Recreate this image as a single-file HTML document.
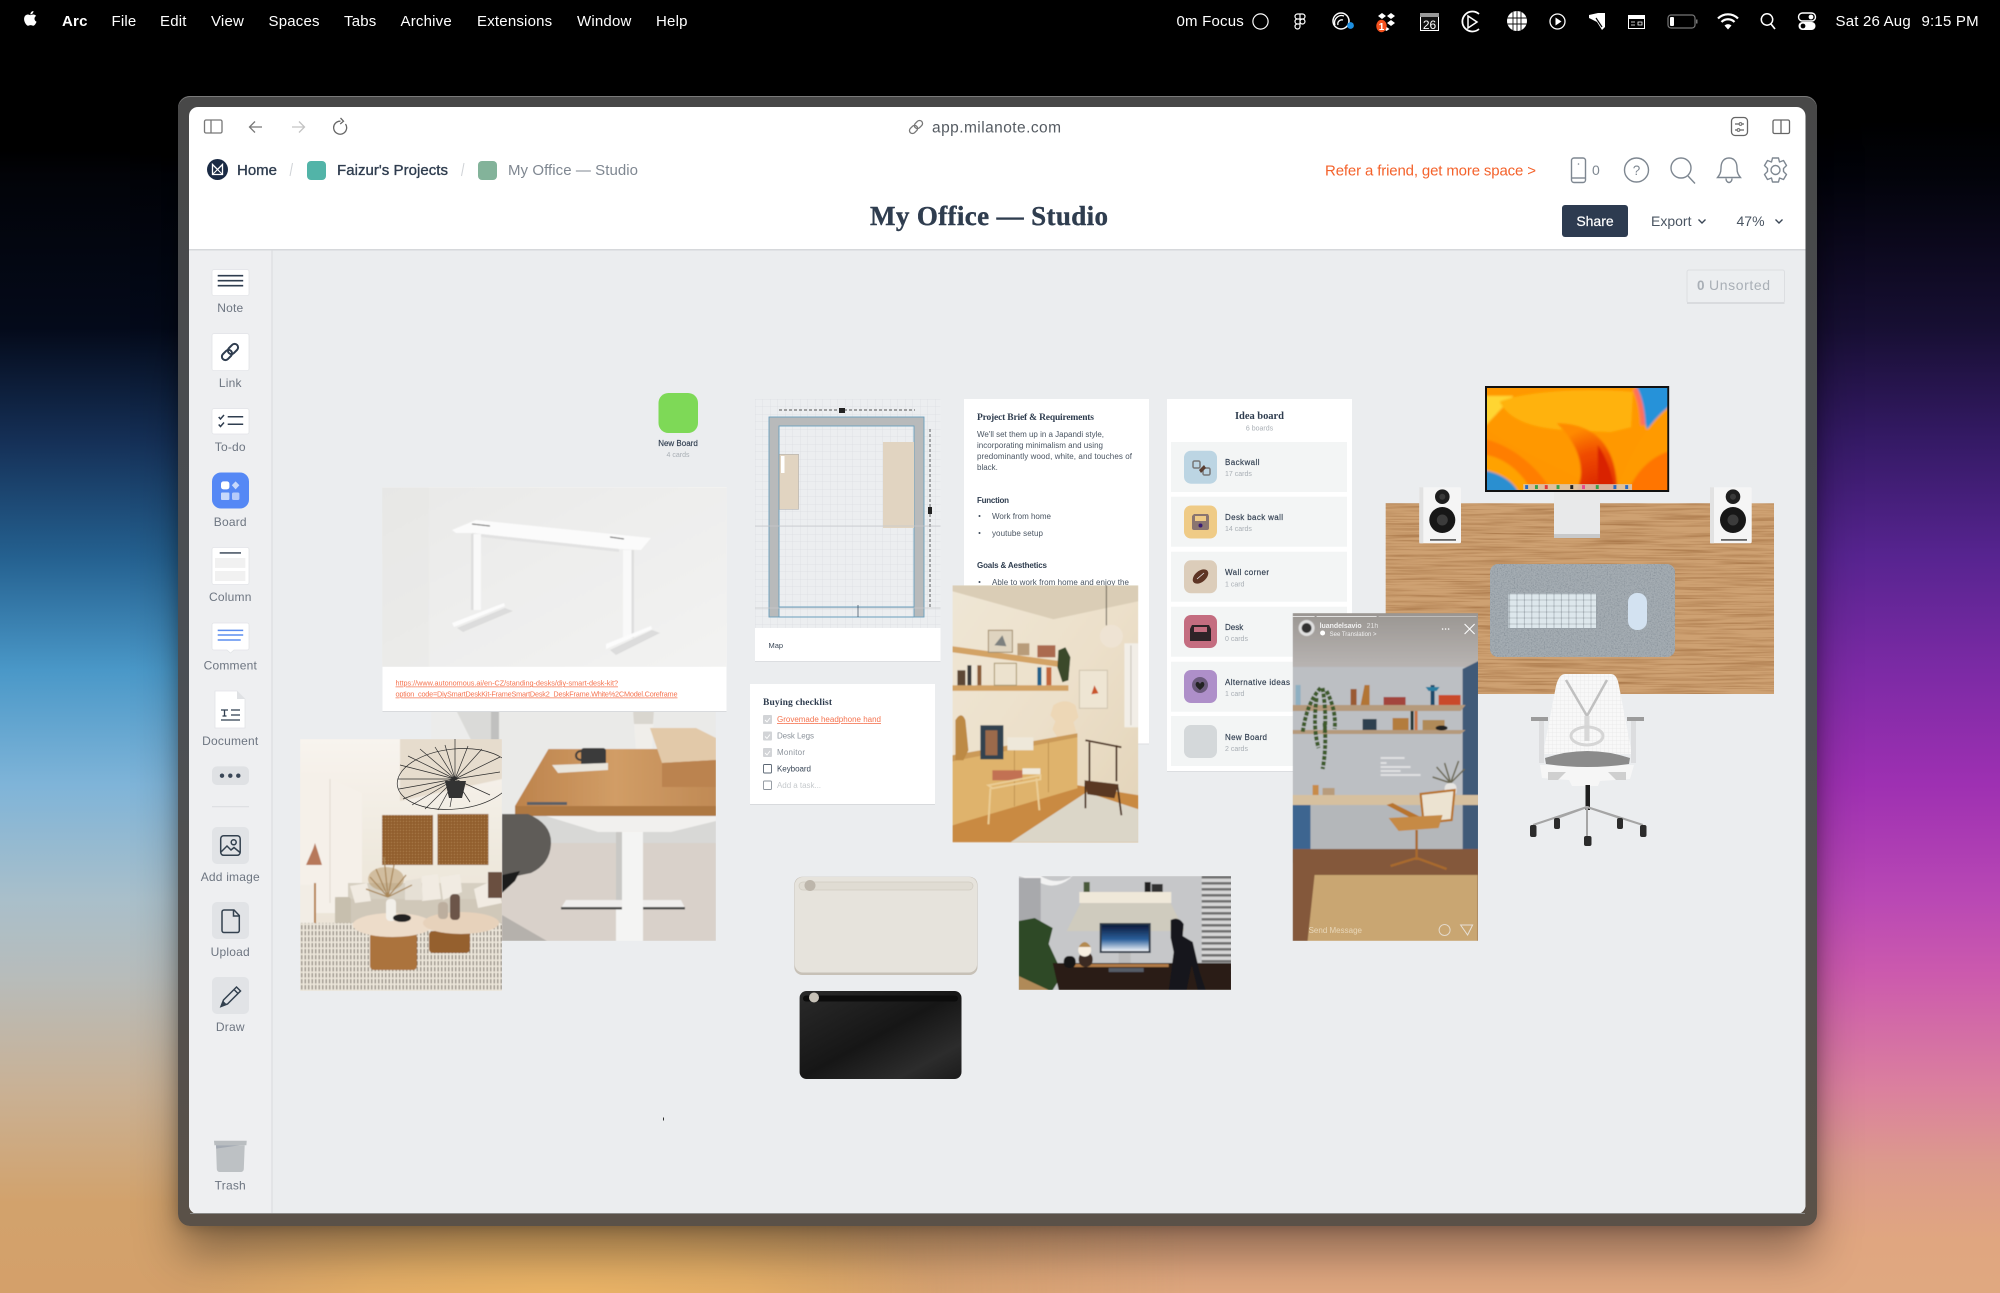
<!DOCTYPE html>
<html><head><meta charset="utf-8"><title>My Office — Studio</title>
<style>
html,body{margin:0;padding:0;width:2000px;height:1293px;overflow:hidden;background:#000}
.wp{position:absolute;left:0;top:0;width:2000px;height:1293px}
#w1{background:linear-gradient(to bottom,#000 0,#000 150px,#020308 176px,#040a1a 328px,#153057 442px,#24608f 556px,#4a98c8 671px,#7fb4d8 785px,#a9bfca 899px,#b7bcbb 975px,#c9b195 1089px,#d2a26c 1203px,#d4a06a 1293px)}
#w2{background:linear-gradient(to bottom,#000 0,#000 120px,#02030a 176px,#170f33 328px,#351a66 442px,#572490 556px,#7c2aa5 671px,#9e30b2 785px,#b948b4 899px,#cc5aad 975px,#db809e 1089px,#dc9a8c 1165px,#e0a680 1241px,#e0a880 1293px);-webkit-mask-image:linear-gradient(to right,transparent 40%,#000 60%);mask-image:linear-gradient(to right,transparent 40%,#000 60%)}
#w3{background:radial-gradient(ellipse 380px 110px at 560px 1293px,#ecb567 0,rgba(236,181,103,.7) 50%,rgba(236,181,103,0) 100%)}
#win{position:absolute;left:177.5px;top:96px;width:1639.5px;height:1130px;border-radius:12px;background:linear-gradient(to bottom,#484848 0,#4a4f55 50%,#5a5148 100%);box-shadow:0 30px 45px -2px rgba(0,0,0,.36),0 0 16px rgba(0,0,0,.28),inset 0 1px 0 #7a7a7a}
svg#s{position:absolute;left:0;top:0}
text{font-family:"Liberation Sans",sans-serif;white-space:pre}
.sf{font-family:"Liberation Serif",serif;font-weight:700}
.m{font-size:15px;fill:#fff;letter-spacing:.2px}
.lb{font-size:12px;fill:#6d7581;text-anchor:middle;letter-spacing:.2px}
.c{font-size:8px;fill:#4a5562}
.h{font-size:8px;fill:#2f3d4f;font-weight:700}
.st{font-size:7px;fill:#a9afb5}
.bn{font-size:8px;fill:#2f3d4f;stroke:#2f3d4f;stroke-width:.15px}
.ck{font-size:8px;fill:#8d949c}
.med{stroke-width:.35px}
</style></head><body>
<div class="wp" id="w1"></div><div class="wp" id="w2"></div><div class="wp" id="w3"></div>
<div id="win"></div>
<svg id="s" width="2000" height="1293" viewBox="0 0 2000 1293" xmlns="http://www.w3.org/2000/svg">
<defs>
<clipPath id="inner"><rect x="189" y="107" width="1616.5" height="1107" rx="9"/></clipPath>
<pattern id="grid" width="7.5" height="7.5" patternUnits="userSpaceOnUse"><path d="M7.5 0H0V7.5" fill="none" stroke="#d6d8db" stroke-width=".5"/></pattern>
<pattern id="keys" width="7.4" height="6" patternUnits="userSpaceOnUse"><rect x=".3" y=".3" width="6.8" height="5.4" rx=".6" fill="#dde7ec"/></pattern>
<pattern id="mesh" width="4" height="4" patternUnits="userSpaceOnUse"><path d="M4 0H0V4" fill="none" stroke="#e2e2e2" stroke-width=".6"/></pattern>
<pattern id="weave" width="3" height="3" patternUnits="userSpaceOnUse"><rect width="3" height="3" fill="#8f5c2b"/><rect x=".9" y=".9" width="1.1" height="1.1" fill="#bd8f5b"/></pattern>
<pattern id="rugp" width="3.500" height="6" patternUnits="userSpaceOnUse"><rect width="3.500" height="6" fill="#ece6da"/><rect x="1.300" width=".9" height="4.500" fill="#5e564c"/></pattern>
<pattern id="blinds" width="6" height="6" patternUnits="userSpaceOnUse"><rect width="6" height="6" fill="#d6d6d6"/><rect width="6" height="2.600" fill="#6f6f6f"/></pattern>
<filter id="woodf" x="0" y="0" width="100%" height="100%" color-interpolation-filters="sRGB"><feTurbulence type="fractalNoise" baseFrequency="0.015 0.5" numOctaves="3" seed="4"/><feColorMatrix values="0 0 0 0 .62  0 0 0 0 .42  0 0 0 0 .24  1.100 1.100 0 0 -.95"/></filter>
<filter id="feltf" x="0" y="0" width="100%" height="100%" color-interpolation-filters="sRGB"><feTurbulence type="fractalNoise" baseFrequency="0.7" numOctaves="2" seed="7"/><feColorMatrix values="0 0 0 0 .45  0 0 0 0 .49  0 0 0 0 .53  .9 .9 0 0 -.8"/></filter>
<filter id="soft" x="-2%" y="-2%" width="104%" height="104%"><feGaussianBlur stdDeviation=".45"/></filter>
<filter id="soft2" x="-2%" y="-2%" width="104%" height="104%"><feGaussianBlur stdDeviation="1.100"/></filter>
<linearGradient id="g1" x1="0" y1="0" x2="1" y2="1"><stop offset="0" stop-color="#e9e9e8"/><stop offset=".5" stop-color="#eeeeed"/><stop offset="1" stop-color="#f3f3f2"/></linearGradient>
<linearGradient id="woodt" x1="0" y1="0" x2="1" y2="0"><stop offset="0" stop-color="#bd834c"/><stop offset=".5" stop-color="#d19d66"/><stop offset="1" stop-color="#c08a55"/></linearGradient>
<linearGradient id="wallL" x1="0" y1="0" x2="0" y2="1"><stop offset="0" stop-color="#f8f4ee"/><stop offset=".45" stop-color="#efe9de"/><stop offset="1" stop-color="#e8dfd1"/></linearGradient>
<linearGradient id="wallS" x1="0" y1="0" x2="1" y2="1"><stop offset="0" stop-color="#efe6d5"/><stop offset=".5" stop-color="#ece0ca"/><stop offset="1" stop-color="#e2d3b8"/></linearGradient>
<linearGradient id="insT" x1="0" y1="0" x2="0" y2="1"><stop offset="0" stop-color="#9a9692"/><stop offset="1" stop-color="#b8b4b2"/></linearGradient>
<linearGradient id="blk" x1="0" y1="0" x2="1" y2="1"><stop offset="0" stop-color="#2a2a2a"/><stop offset=".5" stop-color="#161616"/><stop offset=".8" stop-color="#2c2c2c"/><stop offset="1" stop-color="#1c1c1c"/></linearGradient>
<linearGradient id="scr" x1="0" y1="0" x2="0" y2="1"><stop offset="0" stop-color="#0e1a3c"/><stop offset=".55" stop-color="#2a5f9a"/><stop offset="1" stop-color="#eef2f8"/></linearGradient>
<radialGradient id="redc" cx=".65" cy=".95" r=".9"><stop offset="0" stop-color="#d92400"/><stop offset=".6" stop-color="#f04c00"/><stop offset="1" stop-color="#ff8a00"/></radialGradient>
</defs>

<!-- menu bar -->
<g transform="translate(20.5,8.5) scale(.82)" fill="#fff"><path d="M17.05 20.28c-.98.95-2.05.8-3.08.35-1.09-.46-2.09-.48-3.24 0-1.44.62-2.2.44-3.06-.35C2.79 15.25 3.51 7.59 9.05 7.31c1.35.07 2.29.74 3.08.8 1.18-.24 2.31-.93 3.57-.84 1.51.12 2.65.72 3.4 1.8-3.12 1.87-2.38 5.98.48 7.13-.57 1.5-1.31 2.99-2.54 4.09zM12.03 7.25c-.15-2.23 1.66-4.07 3.74-4.25.29 2.58-2.34 4.5-3.74 4.25z"/></g>
<text class="m" x="62" y="26" font-weight="700">Arc</text>
<text class="m" x="111.500" y="26">File</text><text class="m" x="160" y="26">Edit</text><text class="m" x="211" y="26">View</text><text class="m" x="268.500" y="26">Spaces</text><text class="m" x="344" y="26">Tabs</text><text class="m" x="400.500" y="26">Archive</text><text class="m" x="477" y="26">Extensions</text><text class="m" x="577" y="26">Window</text><text class="m" x="656" y="26">Help</text>
<text class="m" x="1176.500" y="26">0m Focus</text>
<circle cx="1260.500" cy="21.500" r="7.600" fill="none" stroke="#fff" stroke-width="1.200"/>
<g fill="none" stroke="#fff" stroke-width="1.200"><path d="M1300 14h-2.500a2.500 2.500 0 0 0 0 5h2.500zM1300 14h2.500a2.500 2.500 0 0 1 0 5h-2.500zM1300 19h-2.500a2.500 2.500 0 0 0 0 5h2.500zM1300 24h-2.500a2.500 2.500 0 1 0 2.500 2.500zM1302.500 19a2.500 2.500 0 1 1-.01 0z"/>
<circle cx="1341" cy="21" r="8" stroke-width="1.500"/><path d="M1335 25a7 7 0 0 1 9-9M1338 25a4 4 0 0 1 5-5" stroke-width="1.300"/></g>
<circle cx="1350.500" cy="25.500" r="3.400" fill="#1d8fe0"/>
<g fill="#fff"><path d="M1382 13l4 3-4 3-4-3zM1391 13l4 3-4 3-4-3zM1382 20l4 3-4 3-4-3zM1391 20l4 3-4 3-4-3zM1386.500 27l3 2-3 2-3-2z"/></g>
<ellipse cx="1381.500" cy="26" rx="5.200" ry="6.200" fill="#f4511e"/><text x="1381.500" y="30" font-size="10" font-weight="700" fill="#fff" text-anchor="middle">1</text>
<rect x="1420" y="13" width="19" height="18" fill="#fff"/><rect x="1420" y="13" width="19" height="4" fill="#999"/><rect x="1421" y="17" width="17" height="13" fill="#111"/><text x="1429.500" y="29" font-size="12" fill="#fff" text-anchor="middle">26</text>
<g fill="none" stroke="#fff" stroke-width="1.800"><path d="M1479 14a10 10 0 1 0 0 15"/><path d="M1468 16l9 6-9 6z" stroke-width="1.500"/></g>
<circle cx="1517" cy="21" r="10" fill="#fff"/><g stroke="#111" stroke-width=".9" fill="none"><path d="M1507 18h20M1507 24h20M1513 12v18M1517 11v20M1521 12v18"/></g>
<circle cx="1557.500" cy="21.500" r="7.500" fill="none" stroke="#fff" stroke-width="1.300"/><path d="M1555.500 17.500l6 4-6 4z" fill="#fff"/>
<path d="M1589 15l9-2h7v14l-3 3-5-8-8-4z" fill="#fff"/><path d="M1596 18l6 9" stroke="#000" stroke-width="1.200"/>
<rect x="1628.500" y="15.500" width="16" height="13" fill="none" stroke="#fff" stroke-width="1"/><rect x="1628.500" y="15.500" width="16" height="3.500" fill="#fff"/><path d="M1631 22h4M1631 25h4M1638 22h4v3h-4z" stroke="#fff" stroke-width=".8" fill="none"/>
<rect x="1668" y="15" width="27" height="13" rx="3" fill="none" stroke="#777" stroke-width="1.200"/><rect x="1670" y="17" width="4" height="9" rx="1" fill="#fff"/><rect x="1696" y="19.500" width="1.500" height="4" fill="#777"/>
<g fill="none" stroke="#fff" stroke-width="2.200"><path d="M1718 18.500a14 14 0 0 1 20 0"/><path d="M1721.500 22a9 9 0 0 1 13 0"/></g><path d="M1724.500 25.500a5 5 0 0 1 7 0l-3.500 4z" fill="#fff"/>
<circle cx="1767" cy="19.500" r="5.700" fill="none" stroke="#fff" stroke-width="1.500"/><path d="M1771 24l4 5" stroke="#fff" stroke-width="1.700"/>
<rect x="1798.500" y="13" width="17" height="8" rx="4" fill="none" stroke="#fff" stroke-width="1.400"/><circle cx="1811" cy="17" r="2.400" fill="#fff"/><rect x="1798.500" y="22" width="17" height="8" rx="4" fill="#fff"/><circle cx="1803" cy="26" r="2.400" fill="#000"/>
<text class="m" x="1835.500" y="26">Sat 26 Aug</text><text class="m" x="1921.500" y="26">9:15 PM</text>

<g clip-path="url(#inner)">
<rect x="189" y="107" width="1617" height="1107" fill="#fff"/>
<rect x="189" y="250" width="83" height="964" fill="#eeeff1"/>
<rect x="272" y="250" width="1534" height="964" fill="#ebedef"/>
<rect x="189" y="249" width="1617" height="1.500" fill="#d6d8db"/>
<rect x="271.500" y="250" width="1" height="964" fill="#d8dadd"/>
</g>
<rect x="190" y="1213" width="1615" height="1" fill="#8a8a88"/>

<!-- browser chrome -->
<g fill="none" stroke="#777" stroke-width="1.300">
<rect x="204.500" y="120" width="17.500" height="13" rx="1.500"/><path d="M211 120v13"/>
<path d="M262 127h-12M255 121.500l-5.500 5.500 5.500 5.500"/>
<path d="M292 127h12M299 121.500l5.500 5.500-5.500 5.500" stroke="#c3c3c3"/>
<path d="M345.500 124a6.500 6.500 0 1 1-5-2.800M340.500 118l3 3.200-3.300 2.800" stroke="#666"/>
<rect x="1731.500" y="117.500" width="16" height="18" rx="3.500" stroke="#666"/><path d="M1735 124h4M1742 124h2M1735 130h2M1740 130h4" stroke="#666"/><circle cx="1740.500" cy="124" r="1.400" stroke="#666" stroke-width="1"/><circle cx="1738.500" cy="130" r="1.400" stroke="#666" stroke-width="1"/>
<rect x="1773" y="120" width="16.500" height="13.500" rx="1.500" stroke="#666"/><path d="M1781 120v13.500" stroke="#666"/>
<g transform="translate(916,127) rotate(-45)" stroke="#777"><rect x="-8" y="-3" width="9" height="6" rx="3"/><rect x="-1" y="-3" width="9" height="6" rx="3"/></g>
</g>
<text x="932" y="132.500" font-size="15.500" fill="#555b62" textLength="129">app.milanote.com</text>

<circle cx="217.500" cy="169.500" r="10.500" fill="#1a2a44"/><path d="M212.500 164.500v10h10v-10l-5 5z" fill="none" stroke="#fff" stroke-width="1.300"/><path d="M212.500 174.500l5-5 5 5" fill="none" stroke="#fff" stroke-width="1"/>
<text x="237" y="175" font-size="15" fill="#2f3d4f" stroke="#2f3d4f" class="med" textLength="40">Home</text>
<path d="M292.500 163l-2.500 13M464 163l-2.500 13" stroke="#cfd2d6"/>
<rect x="307" y="161" width="19" height="19" rx="4" fill="#52b4a8"/>
<text x="337" y="175" font-size="15" fill="#2f3d4f" stroke="#2f3d4f" class="med" textLength="111">Faizur's Projects</text>
<rect x="478" y="161" width="19" height="19" rx="4" fill="#83b39a"/>
<text x="508" y="175" font-size="15" fill="#7f8791" textLength="130">My Office — Studio</text>

<text x="1325" y="175.500" font-size="15" fill="#f4622b" textLength="211">Refer a friend, get more space &gt;</text>
<g fill="none" stroke="#7e8791" stroke-width="1.400">
<rect x="1571.500" y="158" width="14" height="24.500" rx="2.500"/><path d="M1571.500 178h14"/>
<circle cx="1636.500" cy="170" r="12"/>
<circle cx="1681" cy="168" r="10"/><path d="M1688 176l7 7.500"/>
<path d="M1729 158c-6 0-8 5-8 10 0 5-1.500 7-3.500 9.500h23c-2-2.500-3.500-4.500-3.500-9.500 0-5-2-10-8-10z M1726 178.500a3 4 0 0 0 6 0"/>
<g transform="translate(1775.500,170)"><circle r="4.500"/><path d="M-3-12h6l1 4 4-1.500 3 5-3 3v3l3 3-3 5-4-1.500-1 4h-6l-1-4-4 1.500-3-5 3-3v-3l-3-3 3-5 4 1.500z" stroke-linejoin="round"/></g>
</g>
<circle cx="1578.500" cy="164" r=".8" fill="#7e8791"/>
<text x="1592" y="175" font-size="14" fill="#7e8791">0</text>
<text x="1636.500" y="175" font-size="13.500" fill="#7e8791" text-anchor="middle">?</text>

<text x="989" y="225" class="sf" font-size="27" fill="#2f3d4f" stroke="#2f3d4f" stroke-width=".4" text-anchor="middle" textLength="238">My Office — Studio</text>
<rect x="1562" y="205" width="66" height="32" rx="3" fill="#2d3b50"/>
<text x="1595" y="226" font-size="14" fill="#fff" text-anchor="middle" stroke="#fff" stroke-width=".2">Share</text>
<text x="1651" y="226" font-size="14" fill="#4a5562">Export</text>
<path d="M1698.500 219.500l3.500 3.500 3.500-3.500M1775.500 219.500l3.500 3.500 3.500-3.500" fill="none" stroke="#3b4756" stroke-width="1.400"/>
<text x="1736.500" y="226" font-size="14" fill="#4a5562">47%</text>
<rect x="1687" y="270" width="97.500" height="33" rx="2" fill="#eceef0" stroke="#dcdee1"/><rect x="1687" y="302" width="97.500" height="2" fill="#d9dbde"/>
<text x="1697" y="290" font-size="13.500" fill="#a9afb6" font-weight="700">0</text><text x="1709" y="290" font-size="14" fill="#a9afb6" textLength="61">Unsorted</text>

<!-- sidebar -->
<g fill="#fff" stroke="#e2e4e7" stroke-width=".8">
<rect x="212" y="269.600" width="37" height="26" rx="2"/><rect x="212" y="333.600" width="37" height="37" rx="2"/><rect x="212" y="408.600" width="37" height="25.400" rx="2"/><rect x="212" y="547.500" width="37" height="37" rx="2"/>
<path d="M214 623h33a2 2 0 0 1 2 2v23a2 2 0 0 1-2 2h-13l-3.500 3-3.500-3h-13a2 2 0 0 1-2-2v-23a2 2 0 0 1 2-2z"/>
<path d="M215 691h22l8 8v29h-30z"/>
</g>
<path d="M237 691l8 8h-8z" fill="#dfe1e4"/>
<path d="M217.700 275.700h25.500M217.700 280.700h25.500M217.700 285.700h25.500" stroke="#2f3d4f" stroke-width="1.700"/>
<g fill="none" stroke="#2f3d4f" stroke-width="2" transform="translate(230,352) rotate(-45)"><rect x="-10" y="-3.500" width="11.500" height="7" rx="3.500"/><rect x="-1.500" y="-3.500" width="11.500" height="7" rx="3.500"/></g>
<path d="M218.700 417l1.800 2 3.500-4M218.700 424.500l1.800 2 3.500-4" fill="none" stroke="#2f3d4f" stroke-width="1.500"/><path d="M227.700 416.800h15.500M227.700 424.300h15.500" stroke="#2f3d4f" stroke-width="1.500"/>
<rect x="212" y="472.500" width="37" height="36" rx="9" fill="#5588f5"/><rect x="221" y="481.400" width="8.400" height="8" rx="2.500" fill="#fff"/><path d="M235.600 481.400l3.800 3.800-3.800 4.200-3.800-4.200z" fill="#c7d8fb"/><rect x="221" y="492.500" width="8.400" height="7.500" rx="1" fill="#c7d8fb"/><rect x="232" y="492.500" width="7.400" height="7.500" rx="1.500" fill="#b5cbfa"/>
<path d="M219.700 552.900h21.300" stroke="#2f3d4f" stroke-width="1.400"/><rect x="215" y="558" width="30.300" height="9.900" fill="#f1f1f1"/><rect x="215" y="571" width="30.300" height="10" fill="#f1f1f1"/>
<path d="M217.700 630.400h25.500M217.700 635h25.500M217.700 640h23" stroke="#5b8def" stroke-width="1.500"/>
<path d="M221 710h7M224.500 710v6M222.500 716h4" stroke="#2f3d4f" stroke-width="1.300" fill="none"/><path d="M231 710h9M231 715h9M221 720h19" stroke="#2f3d4f" stroke-width="1.200"/>
<rect x="212" y="766.400" width="37" height="18.600" rx="5" fill="#dfe1e4"/><circle cx="222" cy="775.700" r="2.200" fill="#3a4757"/><circle cx="230.300" cy="775.700" r="2.200" fill="#3a4757"/><circle cx="238.300" cy="775.700" r="2.200" fill="#3a4757"/>
<path d="M212 806.700h37" stroke="#dcdee1" stroke-width="1.200"/>
<rect x="212" y="827" width="37" height="37" rx="5" fill="#e1e3e6"/><rect x="212" y="902" width="37" height="37" rx="5" fill="#e1e3e6"/><rect x="212" y="977" width="37" height="37" rx="5" fill="#e1e3e6"/>
<g fill="none" stroke="#33414f" stroke-width="1.500"><rect x="220.700" y="835.700" width="19.500" height="19.600" rx="3"/><circle cx="233.700" cy="842.300" r="2.500"/><path d="M221 852l6-6 4 4 3-2.500 6 5"/>
<path d="M224 910h10l5.300 5.500v15a2 2 0 0 1-2 2h-13.300a2 2 0 0 1-2-2v-18.500a2 2 0 0 1 2-2z"/><path d="M233.500 910v6h6"/>
<path d="M221 1006.500l2.500-6.500 13-13 4 4-13 13z"/><path d="M234 989.500l4 4"/></g>
<path d="M220.300 1007.500l3-6.500 3.500 3.500z" fill="#33414f"/>
<path d="M214 1140.700h32.700l-.3 4.600h-32z" fill="#b9bdc0"/><path d="M216 1145.300h28.700l-.9 24a3 3 0 0 1-3 2.700h-21a3 3 0 0 1-3-2.700z" fill="#bdc1c4"/><path d="M216 1145.300h24l-23.800 3.300z" fill="#a3a9b2"/>
<text class="lb" x="230.300" y="312">Note</text><text class="lb" x="230.300" y="387">Link</text><text class="lb" x="230.300" y="451">To-do</text><text class="lb" x="230.300" y="526">Board</text><text class="lb" x="230.300" y="601">Column</text><text class="lb" x="230.300" y="669.500">Comment</text><text class="lb" x="230.300" y="745">Document</text><text class="lb" x="230.300" y="881">Add image</text><text class="lb" x="230.300" y="956">Upload</text><text class="lb" x="230.300" y="1031">Draw</text><text class="lb" x="230.300" y="1189.500">Trash</text>

<!-- new board -->
<rect x="658.500" y="393" width="39.500" height="40" rx="10" fill="#7ed957"/>
<text x="678" y="446" class="bn" text-anchor="middle">New Board</text>
<text x="678" y="457" font-size="7" fill="#a9afb5" text-anchor="middle">4 cards</text>

<!-- table photo -->
<svg x="431" y="710" width="285" height="231" viewBox="0 0 285 231"><g filter="url(#soft)">
<rect width="285" height="231" fill="#eaeae8"/>
<rect width="67" height="40" fill="#dadad8"/><path d="M0 0h25l20 40H0z" fill="#ececeb"/><rect x="60" width="8" height="70" fill="#c0c0bf"/>
<rect y="106" width="285" height="28" fill="#d8d8d6"/>
<path d="M0 133h285v98H0z" fill="#d9d1ca"/>
<path d="M202 0h21l-2 40q-1 8-8 8t-8-8z" fill="#f0eeea"/><path d="M202 0h21l-1 14h-19z" fill="#d9d6cf"/>
<path d="M117.500 39H285V96H84z" fill="url(#woodt)"/><path d="M84 96H285v10H84z" fill="#ae7843"/>
<path d="M219 18h46l20 10v22l-54 3z" fill="#e2c9a9"/><path d="M231 53l54-3v27h-54z" fill="#bb8350"/>
<rect x="150" y="38" width="25" height="20" rx="3" fill="#3a3a3b"/><path d="M150 41a5 4.500 0 0 0 0 9" fill="none" stroke="#3a3a3b" stroke-width="2"/>
<path d="M121 55l56-2v7l-50 3z" fill="#e9e5dc"/>
<path d="M96 92h40v3H96z" fill="#5c6066"/>
<path d="M115 106H285v5l-45 11h-73z" fill="#f1f0ee"/><rect x="185" y="122" width="27" height="109" fill="#f4f4f3"/><rect x="185" y="122" width="6" height="70" fill="#c9c8c5"/>
<path d="M135 190h115l4 8H130z" fill="#efeeed"/><path d="M130 197h124v2.500H130z" fill="#4c4c4c"/><rect x="191" y="186" width="21" height="45" fill="#f4f4f3"/>
<path d="M71 104h26q24 10 23 30-1 20-20 29l-29 6z" fill="#5e5c58"/><path d="M71 165l18-4-5 10-13 12z" fill="#1f1e1c"/>
<path d="M71 205l45 26H71z" fill="#b5b1ac"/>
</g></svg>

<!-- living room -->
<svg x="300" y="739" width="202" height="252" viewBox="0 0 202 252"><g filter="url(#soft)">
<rect width="202" height="252" fill="url(#wallL)"/>
<path d="M100 0h102v40l-102 22z" fill="#e6dccd"/><path d="M30 40L62 54v120H0V40z" fill="#f5f0e9"/><path d="M30 40v124" stroke="#e2dbd0"/>
<rect x="82" y="76" width="51" height="50" fill="url(#weave)"/><rect x="137.500" y="75" width="51" height="51" fill="url(#weave)"/>
<path d="M13 110l2-6 2 6 5 16H6z" fill="#b7785a"/>
<path d="M0 146h14v44H0z" fill="#f2ede5"/><path d="M15 144v50" stroke="#b68049" stroke-width="2"/>
<path d="M35 158h167v28H35z" fill="#d0c8b9"/><path d="M48 144h154v16H48z" fill="#d6cfc1"/><rect x="35" y="158" width="16" height="30" rx="3" fill="#c7bfae"/>
<path d="M50 147l17-3 4 18-16 2zM122 137l16-2 3 25-19 2zM140 138l20-3 2 18-19 8zM174 150l22-10 6 24-24 5z" fill="#f1ebe2"/><path d="M105 142l16-3 2 22h-18z" fill="#e6e0d5"/><path d="M188 133h14v26h-14z" fill="#6b5040"/>
<ellipse cx="86" cy="140" rx="18" ry="12" fill="#ba9a6e" opacity=".55"/>
<g stroke="#a88658" stroke-width="1.200" fill="none"><path d="M88 158L70 138M88 158L76 130M88 158L84 118M88 158L94 126M88 158L106 136M88 158L112 146M88 158L66 150"/></g>
<rect y="184" width="202" height="68" fill="url(#rugp)"/>
<rect x="70" y="194" width="47" height="37" rx="4" fill="#ab733c"/><rect x="129" y="192" width="41" height="22" rx="4" fill="#95602f"/>
<ellipse cx="92.700" cy="186" rx="40" ry="12" fill="#eddcc9"/><ellipse cx="161" cy="184" rx="38" ry="11" fill="#e7d2bb"/>
<rect x="86" y="160" width="10" height="22" rx="4" fill="#f2efe9"/><rect x="150" y="155" width="10" height="26" rx="4" fill="#6c5549"/><rect x="138" y="163" width="10" height="17" rx="4" fill="#bcae9e"/><ellipse cx="102" cy="179" rx="9" ry="4" fill="#222"/>
</g>
<g fill="none" stroke="#2d2d2d" stroke-width=".7"><ellipse cx="155" cy="40" rx="58" ry="30" transform="rotate(-6 155 40)"/><path d="M155 0v40M155 40L98 40M155 40L100 26M155 40L108 17M155 40L120 10M155 40L135 8M155 40L145 6M155 40L168 7M155 40L182 10M155 40L200 18M155 40L200 33M155 40L99 50M155 40L103 60M155 40L112 66M155 40L125 70M155 40L138 71M155 40L150 68M155 40L170 63M155 40L190 56"/></g>
<path d="M145 42h21l-4 17h-13z" fill="#333"/>
</svg>

<!-- desk frame card -->
<rect x="382.500" y="487" width="344" height="224.500" fill="#fff"/><rect x="382.500" y="711" width="344" height="1" fill="#d8dadd"/>
<svg x="382" y="487" width="345" height="180" viewBox="0 0 345 180"><g filter="url(#soft)">
<rect width="345" height="180" fill="url(#g1)"/><rect width="47" height="180" fill="#e4e4e3" opacity=".35"/>
<path d="M75 141l48-20 8 3-50 21zM228 163l42-20 8 3-44 22z" fill="#dcdcdc"/>
<path d="M70 43l24-10 175 18-10 12-22-1L90 46 74 46z" fill="#fbfbfb"/><path d="M90 46l147 16v3L90 49z" fill="#e2e2e2"/>
<rect x="89" y="47" width="10" height="76" fill="#f9f9f9"/><rect x="89" y="47" width="2.500" height="76" fill="#dedede"/>
<path d="M70 136l52-20 1 3-51 21z" fill="#fcfcfc"/>
<rect x="241" y="63" width="11" height="88" fill="#f9f9f9"/><rect x="249.500" y="63" width="2.500" height="88" fill="#dedede"/>
<path d="M224 157l45-18 1 3-46 20z" fill="#fcfcfc"/>
<path d="M90 37l18 2M228 50l14 2" stroke="#555" stroke-width="1"/>
</g></svg>
<g fill="#f5734f" font-size="7.300" text-decoration="underline"><text x="395.500" y="685.500" textLength="222.500">https://www.autonomous.ai/en-CZ/standing-desks/diy-smart-desk-kit?</text><text x="395.500" y="696.500" textLength="282">option_code=DiySmartDeskKit-FrameSmartDesk2_DeskFrame.White%2CModel.Coreframe</text></g>

<!-- map card -->
<rect x="755" y="399" width="185.500" height="262" fill="#fff"/><rect x="755" y="661" width="185.500" height="1" fill="#dcdee1"/>
<svg x="755" y="399" width="185.500" height="229" viewBox="0 0 185.500 229">
<rect width="186" height="229" fill="#eceef0"/><rect width="186" height="229" fill="url(#grid)"/>
<path d="M14 18h155v200h-10V27H24v191H14z" fill="#b8babb"/>
<g fill="none" stroke="#6a9fbd" stroke-width=".9"><rect x="14" y="18" width="155" height="200"/><rect x="24" y="27" width="135" height="191"/><path d="M24 208h135"/></g>
<rect x="24.400" y="55.300" width="19.200" height="55" fill="#e1d4c1" stroke="#999" stroke-width=".4"/><rect x="26" y="57" width="3.500" height="17" fill="#fff"/>
<rect x="128" y="43" width="31" height="86" fill="#e1d4c1"/>
<path d="M24 11h136" stroke="#222" stroke-width=".7" stroke-dasharray="3 2"/><path d="M175 30v180" stroke="#222" stroke-width=".7" stroke-dasharray="3 2"/>
<rect x="84" y="9" width="6" height="5" fill="#222"/><rect x="173" y="108" width="4" height="7" fill="#222"/><path d="M0 127h186M0 209h186" stroke="#c6c8cb" stroke-width=".7"/><path d="M103 206v12" stroke="#345" stroke-width=".7"/>
</svg>
<text x="768.500" y="648" font-size="7.500" fill="#3a4757">Map</text>

<!-- checklist -->
<rect x="750" y="684" width="185" height="120" fill="#fff"/><rect x="750" y="804" width="185" height="1" fill="#d8dadd"/>
<text x="763" y="705" class="sf" font-size="9.500" fill="#2f3d4f" textLength="69">Buying checklist</text>
<g fill="#d2d4d7"><rect x="763" y="715" width="9" height="9" rx="1"/><rect x="763" y="731.500" width="9" height="9" rx="1"/><rect x="763" y="748" width="9" height="9" rx="1"/></g>
<path d="M765 720l2 2 3-4M765 736.500l2 2 3-4M765 753l2 2 3-4" stroke="#fff" fill="none" stroke-width=".9"/>
<g fill="none" stroke="#5a6673" stroke-width=".9"><rect x="763.500" y="764.500" width="8" height="8.500" rx="1"/><rect x="763.500" y="781" width="8" height="8.500" rx="1" stroke="#8d949c"/></g>
<text x="777" y="722" font-size="8" fill="#f5734f" text-decoration="underline" textLength="104">Grovemade headphone hand</text>
<text x="777" y="738.500" class="ck" textLength="37" fill="#9aa0a7">Desk Legs</text><text x="777" y="755" class="ck" textLength="28" fill="#9aa0a7">Monitor</text>
<text x="777" y="771.500" font-size="8" fill="#3a4757" textLength="34">Keyboard</text><text x="777" y="788" font-size="8" fill="#c6cacd" textLength="44">Add a task...</text>

<!-- brief card -->
<rect x="964" y="399" width="185" height="344.500" fill="#fff"/><rect x="964" y="743.500" width="185" height="1" fill="#dcdee1"/>
<text x="977" y="420" class="sf" font-size="9.500" fill="#2f3d4f" textLength="117">Project Brief &amp; Requirements</text>
<g class="c"><text class="c" x="977" y="437" textLength="127">We'll set them up in a Japandi style,</text><text class="c" x="977" y="448" textLength="126">incorporating minimalism and using</text><text class="c" x="977" y="459" textLength="155">predominantly wood, white, and touches of</text><text class="c" x="977" y="470">black.</text>
<text class="h" x="977" y="503" textLength="32">Function</text>
<text class="c" x="992" y="519" textLength="59">Work from home</text><text class="c" x="992" y="536" textLength="51">youtube setup</text>
<text class="h" x="977" y="568" textLength="70">Goals &amp; Aesthetics</text>
<text class="c" x="992" y="585" textLength="137">Able to work from home and enjoy the</text></g>
<g fill="#3a4757"><circle cx="979.500" cy="516" r="1"/><circle cx="979.500" cy="533" r="1"/><circle cx="979.500" cy="582" r="1"/></g>

<!-- shelf photo -->
<svg x="952.400" y="585.300" width="186" height="257.400" viewBox="0 0 186 257.400"><g filter="url(#soft)">
<rect width="186" height="258" fill="url(#wallS)"/>
<path d="M0 0h186v16l-85 18L0 6z" fill="#dacdb6"/>
<rect x="172" y="58" width="14" height="84" fill="#f2eee7"/><rect x="178" y="60" width="1" height="80" fill="#c6c1b7"/>
<path d="M0 61l116 16v6L0 67z" fill="#d3a365"/><rect y="100" width="116" height="5.500" fill="#d3a365"/>
<rect x="36" y="45" width="24" height="22" fill="#dfd4c0" stroke="#a08c6c"/><path d="M42 60l8-10 4 11z" fill="#7d807f"/><rect x="65" y="58" width="12" height="12" fill="#b89c7a"/><rect x="85" y="60" width="18" height="12" fill="#ab6a50"/>
<rect x="5" y="85" width="8" height="15" fill="#5b4636"/><rect x="15" y="80" width="4" height="20" fill="#3a3a3a"/><rect x="20" y="80" width="3" height="20" fill="#efe9db"/><rect x="25" y="80" width="4" height="20" fill="#8b5d3a"/><rect x="42" y="78" width="22" height="22" fill="#ece2ce" stroke="#a9966f"/><rect x="85" y="82" width="4" height="18" fill="#246089"/><rect x="90" y="80" width="3" height="20" fill="#efe9db"/><rect x="94" y="82" width="5" height="18" fill="#c2663b"/>
<path d="M106 65l7-3 5 10-2 23-6 2-5-15z" fill="#3a4a2c"/>
<rect x="127" y="85" width="28" height="38" fill="#eee5d3" stroke="#cfc4ae"/><path d="M142 100l4 8-7 1z" fill="#c9542c"/>
<path d="M154 0v40" stroke="#5f584e"/><circle cx="159" cy="51" r="11.500" fill="#eee3d3"/>
<path d="M101 120q12-8 22 0l3 12-5 5 3 10-5 5H105l-5-8 3-8-5-6z" fill="#edd7b6"/>
<path d="M0 240l125-40 61 10v47H0z" fill="#c98a42"/>
<path d="M0 174l125-23v52L0 240z" fill="#dfb36c"/><path d="M0 170l125-22v4L0 176z" fill="#cb9a58"/><path d="M62 163v58M96 157v50" stroke="#b98a4b" stroke-width=".8"/>
<rect x="28" y="140" width="23" height="34" fill="#33424f"/><rect x="33" y="145" width="12" height="25" fill="#9b6a4b"/>
<rect x="55" y="152" width="26" height="13" fill="#eee8da"/><rect x="40" y="185" width="30" height="10" fill="#c27153"/><rect x="70" y="183" width="18" height="6" fill="#efe9dc"/>
<path d="M3 135q6-10 10 0l3 30-5 10H3z" fill="#bd8a45"/>
<path d="M58 257l76-50 52 17v33z" fill="#dbd6c8"/>
<path d="M36 200l52-10v4l-48 9zM38 203l-2 36M84 193l3 32" fill="none" stroke="#eacc94" stroke-width="2"/>
<g stroke="#4a2f1e" stroke-width="1.800" fill="none"><path d="M133 155l36 7M137 157v40M164 160v36M133 197l32 3 4 30M133 197v26"/></g><path d="M132 195l34 4-4 14-27-4z" fill="#5a3720"/>
</g></svg>

<!-- idea board -->
<rect x="1167" y="399" width="185" height="372" fill="#fff"/><rect x="1167" y="771" width="185" height="1" fill="#dcdee1"/>
<text x="1259.500" y="419" class="sf" font-size="10.500" fill="#2f3d4f" text-anchor="middle" textLength="49">Idea board</text>
<text x="1259.500" y="430.500" class="st" text-anchor="middle">6 boards</text>
<g fill="#f3f5f5"><rect x="1171" y="442" width="176" height="50"/><rect x="1171" y="496.700" width="176" height="50"/><rect x="1171" y="551.700" width="176" height="50"/><rect x="1171" y="606.700" width="176" height="50"/><rect x="1171" y="661.700" width="176" height="50"/><rect x="1171" y="716" width="176" height="50"/></g>
<rect x="1184" y="450.700" width="33" height="33" rx="7" fill="#bcd5e3"/><rect x="1184" y="505.500" width="33" height="33" rx="7" fill="#efcb86"/><rect x="1184" y="560.300" width="33" height="33" rx="7" fill="#dccdba"/><rect x="1184" y="615" width="33" height="33" rx="7" fill="#c46d80"/><rect x="1184" y="670" width="33" height="33" rx="7" fill="#ae8fc9"/><rect x="1184" y="725" width="33" height="33" rx="7" fill="#d4d8da"/>
<rect x="1193" y="461" width="7" height="7" rx="1.500" fill="none" stroke="#777" stroke-width="1.500"/><rect x="1203" y="468" width="7" height="7" rx="1.500" fill="none" stroke="#777" stroke-width="1.500"/><path d="M1199 470l5-5 2 3-5 5z" fill="#5a3e31"/>
<path d="M1194 514h14l1 2v12a2 2 0 0 1-2 2h-13a2 2 0 0 1-2-2v-12z" fill="#8a7570"/><rect x="1195" y="516" width="11" height="5" fill="#efcb86"/><circle cx="1200.500" cy="525.500" r="2" fill="#3a1d73"/>
<ellipse cx="1200.500" cy="576.500" rx="9" ry="5.500" fill="#5e3524" transform="rotate(-40 1200.500 576.500)"/><path d="M1197 579l7-6" stroke="#eee" stroke-width=".8"/>
<path d="M1192 625h17l2 4v12h-21v-12z" fill="#2e2428"/><rect x="1194" y="627" width="13" height="5" fill="#c46d80"/>
<circle cx="1200" cy="685" r="8" fill="#6b5a7c"/><path d="M1200 690c-4-3-5-5-4-7s3-1 4 1c1-2 3-3 4-1s0 4-4 7z" fill="#222"/>
<text class="bn" x="1225" y="465" textLength="34.500">Backwall</text><text class="st" x="1225" y="476">17 cards</text>
<text class="bn" x="1225" y="520" textLength="58">Desk back wall</text><text class="st" x="1225" y="531">14 cards</text>
<text class="bn" x="1225" y="575" textLength="44">Wall corner</text><text class="st" x="1225" y="586.500">1 card</text>
<text class="bn" x="1225" y="630">Desk</text><text class="st" x="1225" y="641">0 cards</text>
<text class="bn" x="1225" y="685" textLength="65">Alternative ideas</text><text class="st" x="1225" y="696">1 card</text>
<text class="bn" x="1225" y="740" textLength="42">New Board</text><text class="st" x="1225" y="751">2 cards</text>

<!-- desk mock -->
<rect x="1385.700" y="503.300" width="388.300" height="190.700" fill="#cea172"/>
<svg x="1385.700" y="503.300" width="388.300" height="190.700"><rect width="388.300" height="190.700" filter="url(#woodf)"/></svg>
<rect x="1554" y="492" width="46" height="46" fill="#e8e9ea"/><rect x="1554" y="534" width="46" height="4" fill="#c8c9ca"/>
<g><rect x="1419.300" y="487.300" width="41.700" height="56" rx="1.500" fill="#f5f5f5"/><rect x="1419.300" y="487.300" width="4" height="56" fill="#e2e2e2"/><circle cx="1442.300" cy="496.700" r="7.300" fill="#1e1e1e"/><circle cx="1442.300" cy="496.700" r="3" fill="#3a3a3a"/><circle cx="1442.300" cy="520" r="13" fill="#171717"/><circle cx="1442.300" cy="520" r="5.500" fill="#3c3c3c"/><rect x="1430" y="539" width="26" height="1.800" fill="#666"/></g>
<g><rect x="1710" y="487.300" width="41.700" height="56" rx="1.500" fill="#f5f5f5"/><rect x="1710" y="487.300" width="4" height="56" fill="#e2e2e2"/><circle cx="1733" cy="496.700" r="7.300" fill="#1e1e1e"/><circle cx="1733" cy="496.700" r="3" fill="#3a3a3a"/><circle cx="1733" cy="520" r="13" fill="#171717"/><circle cx="1733" cy="520" r="5.500" fill="#3c3c3c"/><rect x="1721" y="539" width="26" height="1.800" fill="#666"/></g>
<svg x="1485" y="386" width="184.300" height="106" viewBox="0 0 184.300 106">
<rect width="184.300" height="106" fill="#111"/>
<svg x="2" y="2" width="180.300" height="102" viewBox="0 0 182 104"><g filter="url(#soft2)">
<rect x="-4" y="-4" width="190" height="112" fill="#ff9800"/>
<path d="M-4 8h30L-4 40z" fill="#ffd532"/>
<path d="M12 14C40 2 110 0 148 4L146 40 125 45C90 42 30 48 12 14z" fill="#ffb208"/>
<path d="M-4 40C25 62 70 80 125 108H-4z" fill="#ff9600"/>
<path d="M-4 52C25 58 55 84 66 108H-4z" fill="#ff7e00"/><path d="M-4 68C16 70 36 86 46 108H-4z" fill="#ffa200"/><path d="M-4 84C10 86 26 94 32 108H-4z" fill="#2a8fd0"/>
<path d="M70 36C118 36 132 70 132 108H88C102 88 94 58 70 36Z" fill="url(#redc)"/>
<path d="M112 58q14 20 18 50h-18z" fill="#d92400"/>
<path d="M150 -4h36v26l-24 20-6-22z" fill="#2592d9"/><path d="M150 1q7 14 8 37" stroke="#ff6f5a" stroke-width="5" fill="none"/>
<path d="M186 18C160 38 142 72 130 108h56z" fill="#ff9a00"/><path d="M186 64C166 70 150 86 142 108h44z" fill="#ff7400"/>
</g>
<rect x="36" y="98" width="111" height="6" fill="#d8c9b8" opacity=".85"/><g fill="#2a6ac0"><rect x="38" y="99" width="3" height="4"/><rect x="48" y="99" width="3" height="4" fill="#35a04a"/><rect x="58" y="99" width="3" height="4" fill="#e03a3a"/><rect x="70" y="99" width="3" height="4" fill="#35a04a"/><rect x="84" y="99" width="3" height="4" fill="#222"/><rect x="96" y="99" width="3" height="4" fill="#e84a8a"/><rect x="110" y="99" width="3" height="4" fill="#35a04a"/><rect x="128" y="99" width="3" height="4"/><rect x="140" y="99" width="3" height="4"/></g>
</svg></svg>
<rect x="1490" y="564" width="185" height="93" rx="8" fill="#a4acb2"/>
<svg x="1490" y="564" width="185" height="93"><defs><clipPath id="mat"><rect width="185" height="93" rx="8"/></clipPath></defs><g clip-path="url(#mat)"><rect width="185" height="93" filter="url(#feltf)"/></g></svg>
<rect x="1507.700" y="593" width="89" height="36" rx="1.500" fill="#98a1a8"/><rect x="1508.500" y="593.500" width="87.500" height="34.500" fill="url(#keys)"/>
<rect x="1628" y="593" width="19" height="37" rx="9" fill="#d3e2f1"/>

<!-- insta photo -->
<svg x="1292.600" y="613" width="185.400" height="328" viewBox="0 0 185.400 328"><g filter="url(#soft)">
<rect width="186" height="328" fill="#bcbfc3"/>
<rect width="186" height="54" fill="url(#insT)"/>
<path d="M170 56l16-8v210h-16z" fill="#3f5a78"/>
<path d="M0 92h173l-5 6H0zM0 117h173l-5 4H0z" fill="#b59a7c"/>
<rect x="3" y="72" width="5" height="20" fill="#8eb0c2"/><path d="M58 76h6v16h-6z" fill="#9a5a30"/><path d="M72 72h5v20h-9z" fill="#b27435"/><rect x="91" y="84" width="22" height="8" fill="#a3443c"/><rect x="138" y="72" width="4" height="20" fill="#1f4a6a"/><path d="M133 74h14l-3 4h-8z" fill="#2a7da0"/><rect x="146" y="82" width="22" height="10" fill="#c9492a"/>
<rect x="70" y="106" width="14" height="11" fill="#2f3f4f"/><rect x="100" y="105" width="16" height="12" fill="#b37c3c"/><rect x="118" y="98" width="3" height="19" fill="#233"/><rect x="122" y="98" width="3" height="19" fill="#c74"/><rect x="130" y="107" width="22" height="10" fill="#b08a58"/><ellipse cx="149" cy="115" rx="6" ry="2.500" fill="#222"/>
<g fill="none" stroke="#3e5a2a" stroke-width="4" stroke-dasharray="4 1.500"><path d="M28 75q-14 15-18 45"/><path d="M30 75q4 25 2 45"/><path d="M34 78q10 20 8 38"/><path d="M24 85q-4 30 2 50"/><path d="M32 110q2 25-2 46"/></g>
<g fill="#e9e9ea" opacity=".8"><rect x="88" y="144" width="24" height="2"/><rect x="88" y="149" width="6" height="2"/><rect x="88" y="153" width="30" height="2"/><rect x="88" y="157" width="20" height="2"/><rect x="88" y="161" width="40" height="2"/></g>
<g stroke="#6b6753" stroke-width="1.500" fill="none"><path d="M158 170l-14-16M158 170l-6-20M158 170l8-22M158 170l14-14M158 170l-18-6"/></g><rect x="152" y="170" width="12" height="13" rx="5" fill="#e8e6e2"/>
<rect x="20" y="172" width="6" height="11" fill="#c88b4a"/><rect x="30" y="175" width="12" height="8" fill="#b89c7c"/>
<rect y="182" width="186" height="10" fill="#d6c09f"/>
<rect y="192" width="18" height="58" fill="#3c6590"/>
<rect x="18" y="192" width="152" height="44" fill="#b4b7ba"/>
<path d="M0 236h186v92H0z" fill="#84593a"/>
<path d="M22 262h163v66H15z" fill="#c9a672"/>
<path d="M128 181l34-4-3 30-28 3z" fill="#ece3d1" stroke="#b8752f" stroke-width="2.200"/><path d="M94 192l6-2 28 14-4 4z" fill="#b8752f"/><path d="M96 205l54-3-4 13-40 3z" fill="#c68a45"/><path d="M124 217v30M124 245l-26 8M124 245l30 11" stroke="#a96a2e" stroke-width="2.400" fill="none"/>
<circle cx="14" cy="15" r="8" fill="#dfdfdf"/><circle cx="14" cy="15" r="5" fill="#333"/>
</g>
<g fill="#fff" opacity=".7"><rect x="0" y="3" width="22" height="1"/><rect x="24" y="3" width="60" height="1"/><rect x="86" y="3" width="98" height="1" opacity=".5"/></g>
<text x="27" y="15" font-size="7" fill="#f1f1f1" font-weight="700" textLength="42">luandelsavio</text><text x="74" y="15" font-size="7" fill="#f1f1f1" opacity=".8">21h</text>
<circle cx="30" cy="20" r="2.500" fill="#fff"/><text x="37" y="23" font-size="6" fill="#f1f1f1">See Translation &gt;</text>
<circle cx="150" cy="16" r=".8" fill="#fff"/><circle cx="153" cy="16" r=".8" fill="#fff"/><circle cx="156" cy="16" r=".8" fill="#fff"/>
<path d="M172 11l10 10M182 11l-10 10" stroke="#fff" stroke-width="1"/>
<text x="16" y="320" font-size="8" fill="#f2e6cf" opacity=".75">Send Message</text>
<circle cx="152" cy="317" r="5.500" fill="none" stroke="#eee" opacity=".7"/><path d="M168 312h12l-5 10z" fill="none" stroke="#eee" opacity=".8"/>
</svg>

<!-- chair -->
<path d="M1565 674h46q6 0 8 12l13 68h-89l13-68q3-12 9-12z" fill="#f8f8f8"/><path d="M1565 674h46q6 0 8 12l13 68h-89l13-68q3-12 9-12z" fill="url(#mesh)"/>
<path d="M1566 680l21 36 20-36" fill="none" stroke="#c0c0c0" stroke-width="2.500"/><path d="M1587 716v25" stroke="#d8d8d8" stroke-width="5"/><ellipse cx="1587" cy="736" rx="16" ry="9" fill="none" stroke="#d5d5d5" stroke-width="3"/>
<path d="M1531 717h17v4h-17zM1627 717h17v4h-17z" fill="#9b9b9b"/><path d="M1539 721h5v42h-5zM1631 721h5v42h-5z" fill="#dcdddf"/>
<path d="M1540 765h94l-4 14-30 2-2 5h-26l-3-6-27-2z" fill="#f6f6f6"/><path d="M1545 758q42-14 85 0l-1 6q-42 6-83 0z" fill="#8b8b8b"/><path d="M1548 772h18l-8 8h-10zM1626 772h-18l8 8h10z" fill="#cfcfcf"/>
<rect x="1585.500" y="785" width="4.500" height="25" fill="#1e1e1e"/>
<g stroke="#a5a5a5" stroke-width="2" fill="none"><path d="M1587 807l-54 18M1587 807l56 18M1587 807l-30 11M1587 807l33 11M1587 807v30"/></g>
<g fill="#2b2b2b"><rect x="1530" y="825" width="6.500" height="12" rx="2"/><rect x="1640" y="825" width="6.500" height="12" rx="2"/><rect x="1554" y="818" width="6" height="11" rx="2"/><rect x="1617" y="818" width="6" height="11" rx="2"/><rect x="1584" y="836" width="7.500" height="10" rx="2"/></g>

<!-- sleeves -->
<rect x="794.300" y="876.700" width="183.200" height="98.300" rx="8" fill="#c7c1b7"/><rect x="794.800" y="877" width="182.200" height="95.500" rx="8" fill="#e6e3dc"/>
<rect x="799" y="882" width="174" height="8" rx="4" fill="#e0dcd3" stroke="#d0ccc2" stroke-width=".7"/><circle cx="810" cy="885.500" r="5.500" fill="#bdb6ab"/>
<rect x="799.600" y="991" width="161.900" height="88" rx="7" fill="url(#blk)"/>
<rect x="803" y="995.500" width="155" height="6" rx="3" fill="#0c0c0c"/><circle cx="814" cy="997.500" r="5" fill="#c7c2b8"/>

<!-- setup photo -->
<svg x="1018.700" y="876" width="212.300" height="114" viewBox="0 0 212.300 114"><g filter="url(#soft)">
<rect width="213" height="114" fill="#c6c7c9"/>
<path d="M0 0h22q16 10 32 0h-2v2q-15 12-30 5z" fill="#f2f2f2"/><rect x="0" y="2" width="22" height="60" fill="#a8a9ac"/>
<rect x="183" width="30" height="100" fill="url(#blinds)"/>
<path d="M62 27h90l14 28H48z" fill="#d6cdb7" opacity=".6"/><rect x="60.600" y="16" width="92" height="11" fill="#efe8d9"/>
<rect x="65" y="6" width="6" height="10" fill="#4a5a3a"/><rect x="126" y="6" width="6" height="10" fill="#222"/><rect x="133" y="8" width="11" height="8" fill="#333"/>
<rect x="81" y="47" width="51" height="30" fill="#2d3a4a"/><rect x="83" y="49" width="47" height="26" fill="url(#scr)"/>
<rect x="100" y="77" width="12" height="10" fill="#bbb"/>
<path d="M0 45l16-3 18 10-4 16 14 30-10 16H0z" fill="#2e4a26"/><path d="M0 100l30 14H0z" fill="#b08a58"/>
<path d="M34 87h179v27H40z" fill="#2b1f18"/><rect x="55" y="88" width="95" height="3" fill="#b07a46"/>
<rect x="60" y="76" width="14" height="15" rx="7" fill="#3a2a22"/><circle cx="66" cy="74" r="6.500" fill="#f8efe0"/><path d="M60 71q6-10 12 0z" fill="#b48a50"/>
<rect x="45" y="80" width="12" height="12" rx="5" fill="#181818"/><rect x="90" y="92" width="35" height="4" fill="#555b66"/>
<path d="M152 44q8-4 13 4l-1 12 10 6 7 30 6 18h-8l-6-25-5 25h-18l5-38 -3-14z" fill="#17181a"/>
</g></svg>
<rect x="663" y="1117.500" width="1" height="3" fill="#333"/>
</svg>
</body></html>
